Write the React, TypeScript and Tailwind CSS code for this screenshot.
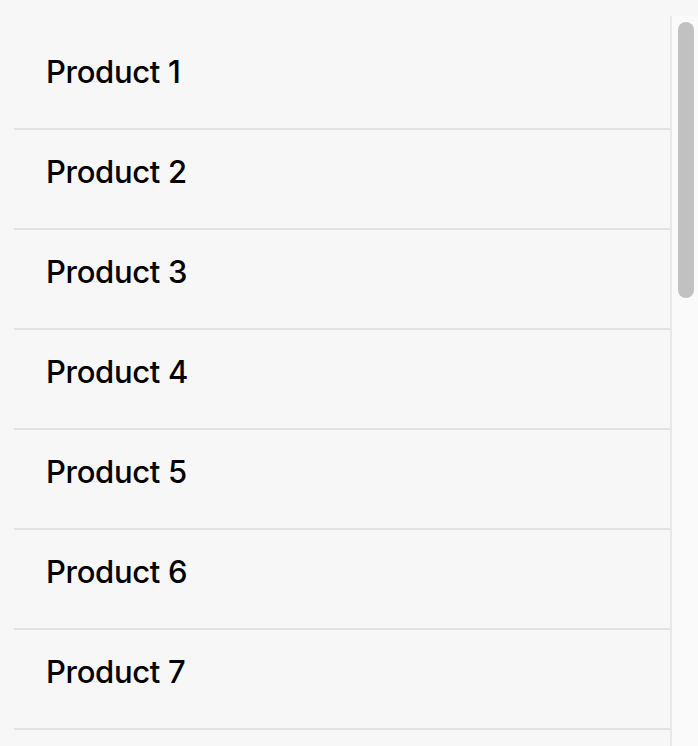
import React from "react";

const products = ["Product 1", "Product 2", "Product 3", "Product 4", "Product 5", "Product 6", "Product 7"];

export default function App() {
  return (
    <div className="flex h-[746px] w-full overflow-hidden bg-[#f7f7f7] pt-4 pl-[14px] font-['Inter',Arial,sans-serif] text-black">
      {/* List */}
      <div className="flex-1 pt-[14px]">
        {products.map((name) => (
          <div key={name} className="h-[100px] border-b-2 border-[#e2e2e2] pt-[26px] pl-[32px]">
            <span className="text-[31px] font-medium leading-8 tracking-[-0.01em]">{name}</span>
          </div>
        ))}
      </div>

      {/* Scrollbar track */}
      <div className="w-[28px] shrink-0 border-l-2 border-[#e8e8e8] bg-[#fafafa] pt-[6px] pl-[6px]">
        <div className="h-[276px] w-4 rounded-full bg-[#c1c1c1]" />
      </div>
    </div>
  );
}
